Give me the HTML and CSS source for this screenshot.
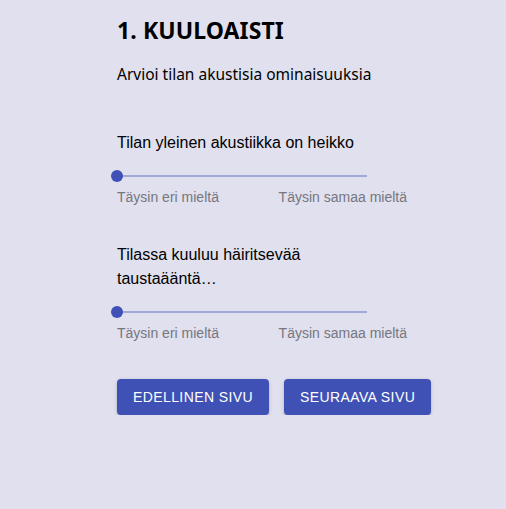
FILE: index.html
```html
<!DOCTYPE html>
<html lang="fi">
<head>
<meta charset="utf-8">
<title>Kuuloaisti</title>
<link rel="stylesheet" href="styles.css">
</head>
<body>
<main class="page">
  <h1 class="title">1. KUULOAISTI</h1>
  <p class="subtitle">Arvioi tilan akustisia ominaisuuksia</p>

  <section class="question q-first">
    <p class="q-text">Tilan yleinen akustiikka on heikko</p>
    <div class="slider">
      <span class="rail"></span>
      <span class="thumb"></span>
    </div>
    <div class="labels">
      <span>Täysin eri mieltä</span>
      <span>Täysin samaa mieltä</span>
    </div>
  </section>

  <section class="question q-second">
    <p class="q-text">Tilassa kuuluu häiritsevää taustaääntä…</p>
    <div class="slider">
      <span class="rail"></span>
      <span class="thumb"></span>
    </div>
    <div class="labels">
      <span>Täysin eri mieltä</span>
      <span>Täysin samaa mieltä</span>
    </div>
  </section>

  <div class="actions">
    <button class="btn">Edellinen sivu</button>
    <button class="btn">Seuraava sivu</button>
  </div>
</main>
</body>
</html>
```

FILE: styles.css
```css
html, body {
  margin: 0;
  padding: 0;
  background: #e0e0ee;
}
body {
  font-family: "Liberation Sans", Arial, sans-serif;
  color: #000;
}
.page {
  padding: 14px 0 0 117px;
  width: 320px;
}
.title {
  margin: 0;
  font-family: "Noto Sans", "Open Sans", sans-serif;
  font-weight: 700;
  font-size: 23px;
  line-height: 32px;
  letter-spacing: 0.1px;
}
.subtitle {
  margin: 16px 0 0;
  font-family: "Noto Sans", sans-serif;
  font-size: 15.5px;
  line-height: 24px;
}
.question {
  width: 250px;
}
.q-first {
  margin-top: 45px;
}
.q-second {
  margin-top: 36px;
}
.q-text {
  margin: 0;
  font-size: 16px;
  line-height: 24px;
}
.slider {
  position: relative;
  height: 2px;
  padding: 13px 0;
  margin-top: 7px;
}
.rail {
  display: block;
  height: 2px;
  background: #9fa8da;
}
.thumb {
  position: absolute;
  left: -6px;
  top: 8px;
  width: 12px;
  height: 12px;
  border-radius: 50%;
  background: #3f51b5;
}
.labels {
  display: flex;
  justify-content: space-between;
  width: 290px;
  margin-top: -3px;
  font-size: 14px;
  line-height: 20px;
  color: #777680;
}
.actions {
  display: flex;
  gap: 15px;
  margin-top: 36px;
}
.btn {
  height: 36px;
  padding: 0 16px;
  border: 0;
  border-radius: 4px;
  background: #3f51b5;
  color: #fff;
  font-family: "Liberation Sans", Arial, sans-serif;
  font-size: 14px;
  letter-spacing: 0.4px;
  text-transform: uppercase;
  box-shadow: 0 3px 1px -2px rgba(0,0,0,0.2), 0 2px 2px 0 rgba(0,0,0,0.14), 0 1px 5px 0 rgba(0,0,0,0.12);
}
```
